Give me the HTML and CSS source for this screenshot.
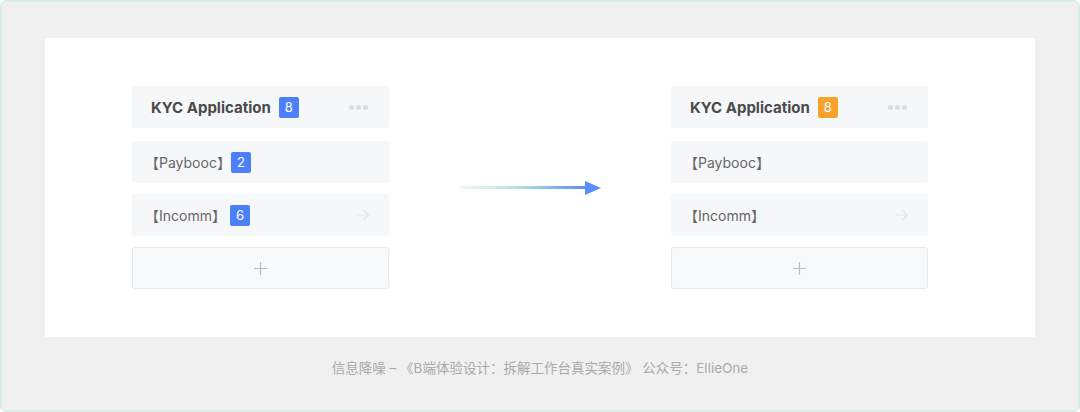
FILE: index.html
```html
<!DOCTYPE html>
<html lang="zh-CN">
<head>
    <meta charset="UTF-8">
    <title>信息降噪</title>
    <link rel="stylesheet" href="styles.css">
</head>
<body>
    <div class="frame">
        <section class="panel">
            <div class="col">
                <div class="card head">
                    <span class="title">KYC Application</span>
                    <span class="badge">8</span>
                    <span class="dots"><i></i><i></i><i></i></span>
                </div>
                <div class="card">
                    <span class="name">【Paybooc】</span>
                    <span class="badge">2</span>
                </div>
                <div class="card">
                    <span class="name wide">【Incomm】</span>
                    <span class="badge">6</span>
                    <svg class="go" width="14" height="12" viewBox="0 0 14 12"><path d="M0 6h12.5M7.5 1l5 5-5 5" fill="none" stroke="#e4e5e7" stroke-width="1.2"/></svg>
                </div>
                <div class="card add">
                    <svg width="13" height="13" viewBox="0 0 13 13"><path d="M6.5 0v13M0 6.5h13" stroke="#bdbdbd" stroke-width="1.2"/></svg>
                </div>
            </div>

            <div class="arrow">
                <div class="line"></div>
                <div class="tip"></div>
            </div>

            <div class="col">
                <div class="card head">
                    <span class="title">KYC Application</span>
                    <span class="badge orange">8</span>
                    <span class="dots"><i></i><i></i><i></i></span>
                </div>
                <div class="card">
                    <span class="name">【Paybooc】</span>
                </div>
                <div class="card">
                    <span class="name">【Incomm】</span>
                    <svg class="go" width="14" height="12" viewBox="0 0 14 12"><path d="M0 6h12.5M7.5 1l5 5-5 5" fill="none" stroke="#e4e5e7" stroke-width="1.2"/></svg>
                </div>
                <div class="card add">
                    <svg width="13" height="13" viewBox="0 0 13 13"><path d="M6.5 0v13M0 6.5h13" stroke="#bdbdbd" stroke-width="1.2"/></svg>
                </div>
            </div>
        </section>
        <footer>信息降噪 – 《B端体验设计：拆解工作台真实案例》 公众号：EllieOne</footer>
    </div>
</body>
</html>
```
FILE: styles.css
```css
body {
    margin: 0;
    font-family: Inter, "Noto Sans CJK SC", sans-serif;
}

.frame {
    box-sizing: border-box;
    width: 1080px;
    height: 412px;
    background-color: #f0f0f0;
    border: 2px solid #d9efe6;
    border-radius: 6px;
    padding: 36px 0 0 43px;
}

.panel {
    display: flex;
    align-items: center;
    width: 990px;
    height: 299px;
    box-sizing: border-box;
    padding: 48px 0 48px 87px;
    background-color: white;
}

.col {
    width: 257px;
    display: flex;
    flex-direction: column;
    gap: 11px;
}

.col .head {
    margin-bottom: 2px;
}

.card {
    height: 42px;
    box-sizing: border-box;
    display: flex;
    align-items: center;
    padding: 0 19px 0 13px;
    background-color: #f6f7f9;
    border-radius: 3px;
    color: #666;
    font-size: 14px;
}

.head {
    padding-left: 19px;
}

.title {
    font-size: 15px;
    font-weight: 700;
    color: #4a4a4a;
    margin-right: 8px;
}

.name {
    margin-right: 0;
}

.name.wide {
    margin-right: 4px;
}

.badge {
    width: 20px;
    height: 21px;
    border-radius: 2px;
    background-color: #4b80f8;
    color: white;
    font-size: 13px;
    display: flex;
    align-items: center;
    justify-content: center;
}

.badge.orange {
    background-color: #f9a12a;
}

.dots {
    margin-left: auto;
    margin-right: 2px;
    display: flex;
    gap: 2px;
}

.dots i {
    width: 5px;
    height: 5px;
    border-radius: 50%;
    background-color: #dcdee2;
}

.go {
    margin-left: auto;
}

.add {
    justify-content: center;
    padding: 0;
    border: 1px solid #e8e9ec;
    background-color: #f8f9fa;
}

.arrow {
    display: flex;
    align-items: center;
    width: 141px;
    margin: 0 70px 0 71px;
}

.line {
    flex: 1;
    height: 3px;
    background: linear-gradient(to right, #eef9f5, #b7e2e2 45%, #5b8ef8);
}

.tip {
    width: 0;
    height: 0;
    border-top: 7px solid transparent;
    border-bottom: 7px solid transparent;
    border-left: 16px solid #5b8ef8;
}

footer {
    text-align: center;
    font-size: 13.5px;
    color: #aaa;
    margin-top: 20px;
    margin-left: -43px;
}
```
